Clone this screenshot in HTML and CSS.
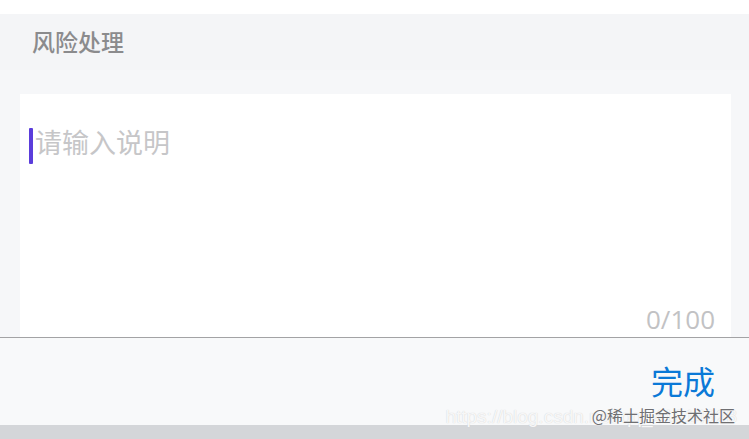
FILE: index.html
```html
<!DOCTYPE html>
<html lang="zh">
<head>
<meta charset="utf-8">
<link rel="stylesheet" href="styles.css">
</head>
<body>
<div class="page">
  <div class="top-gap"></div>
  <div class="sheet">
    <div class="header"><span class="title">风险处理</span></div>
    <div class="spacer"></div>
    <div class="field-row">
      <div class="field">
        <div class="input-line"><span class="caret"></span><span class="placeholder">请输入说明</span></div>
        <div class="counter">0/100</div>
      </div>
    </div>
  </div>
  <div class="divider"></div>
  <div class="footer">
    <span class="done">完成</span>
    <div class="watermark">
      <span class="wm-url">https://blog.csdn.net/qq_41614928</span>
      <span class="wm-brand">@稀土掘金技术社区</span>
    </div>
  </div>
  <div class="bottom"></div>
</div>
</body>
</html>
```
FILE: styles.css
```css
html, body {
  margin: 0;
  padding: 0;
  background: #ffffff;
  font-family: "Noto Sans", "Noto Sans CJK SC", sans-serif;
}
.page {
  width: 749px;
  height: 439px;
  overflow: hidden;
  display: flex;
  flex-direction: column;
}
.top-gap {
  height: 14px;
  background: #ffffff;
}
.sheet {
  background: #f4f5f7;
  display: flex;
  flex-direction: column;
}
.header {
  height: 56px;
  padding-left: 32px;
  display: flex;
  align-items: center;
}
.title {
  font-family: "Noto Sans CJK SC", sans-serif;
  font-size: 23px;
  font-weight: 500;
  color: #8b8b8d;
  line-height: 1;
  margin-top: -2px;
}
.spacer {
  height: 24px;
  background: #f6f7f9;
}
.field-row {
  padding: 0 18px 0 20px;
  background: #f6f7f9;
}
.field {
  height: 243px;
  background: #ffffff;
  display: flex;
  flex-direction: column;
  justify-content: space-between;
}
.input-line {
  display: flex;
  align-items: center;
  padding: 34px 0 0 9px;
}
.caret {
  width: 4px;
  height: 36px;
  background: #5b3ddb;
  border-radius: 1px;
}
.placeholder {
  font-family: "Noto Sans CJK SC", sans-serif;
  font-size: 27px;
  color: #c6c6c8;
  line-height: 1;
  margin-left: 2px;
  margin-top: -9px;
}
.counter {
  align-self: flex-end;
  font-family: "Open Sans", sans-serif;
  font-size: 26px;
  color: #c2c2c4;
  line-height: 1;
  padding: 0 16px 5px 0;
}
.divider {
  height: 1px;
  background: #a3a3a5;
}
.footer {
  height: 87px;
  background: #f8f9fa;
  position: relative;
  display: flex;
  justify-content: flex-end;
  align-items: flex-start;
}
.done {
  font-family: "Noto Sans CJK SC", sans-serif;
  font-size: 32px;
  color: #0b79d7;
  line-height: 1;
  margin: 26px 34px 0 0;
}
.watermark {
  position: absolute;
  right: 12px;
  bottom: 0;
  height: 24px;
}
.wm-url {
  position: absolute;
  right: 0;
  bottom: -3px;
  font-family: "Liberation Sans", sans-serif;
  font-size: 19px;
  color: rgba(255, 255, 255, 0.85);
  text-shadow: 0 0 1px #c8c8ca;
  white-space: nowrap;
}
.wm-brand {
  position: absolute;
  right: 2px;
  bottom: 2px;
  font-family: "Noto Sans CJK SC", sans-serif;
  font-size: 16px;
  color: #6f6f72;
  text-shadow: 0 0 2px #ffffff;
  white-space: nowrap;
  line-height: 1;
}
.bottom {
  flex: 1;
  background: #d4d6d9;
}
```
